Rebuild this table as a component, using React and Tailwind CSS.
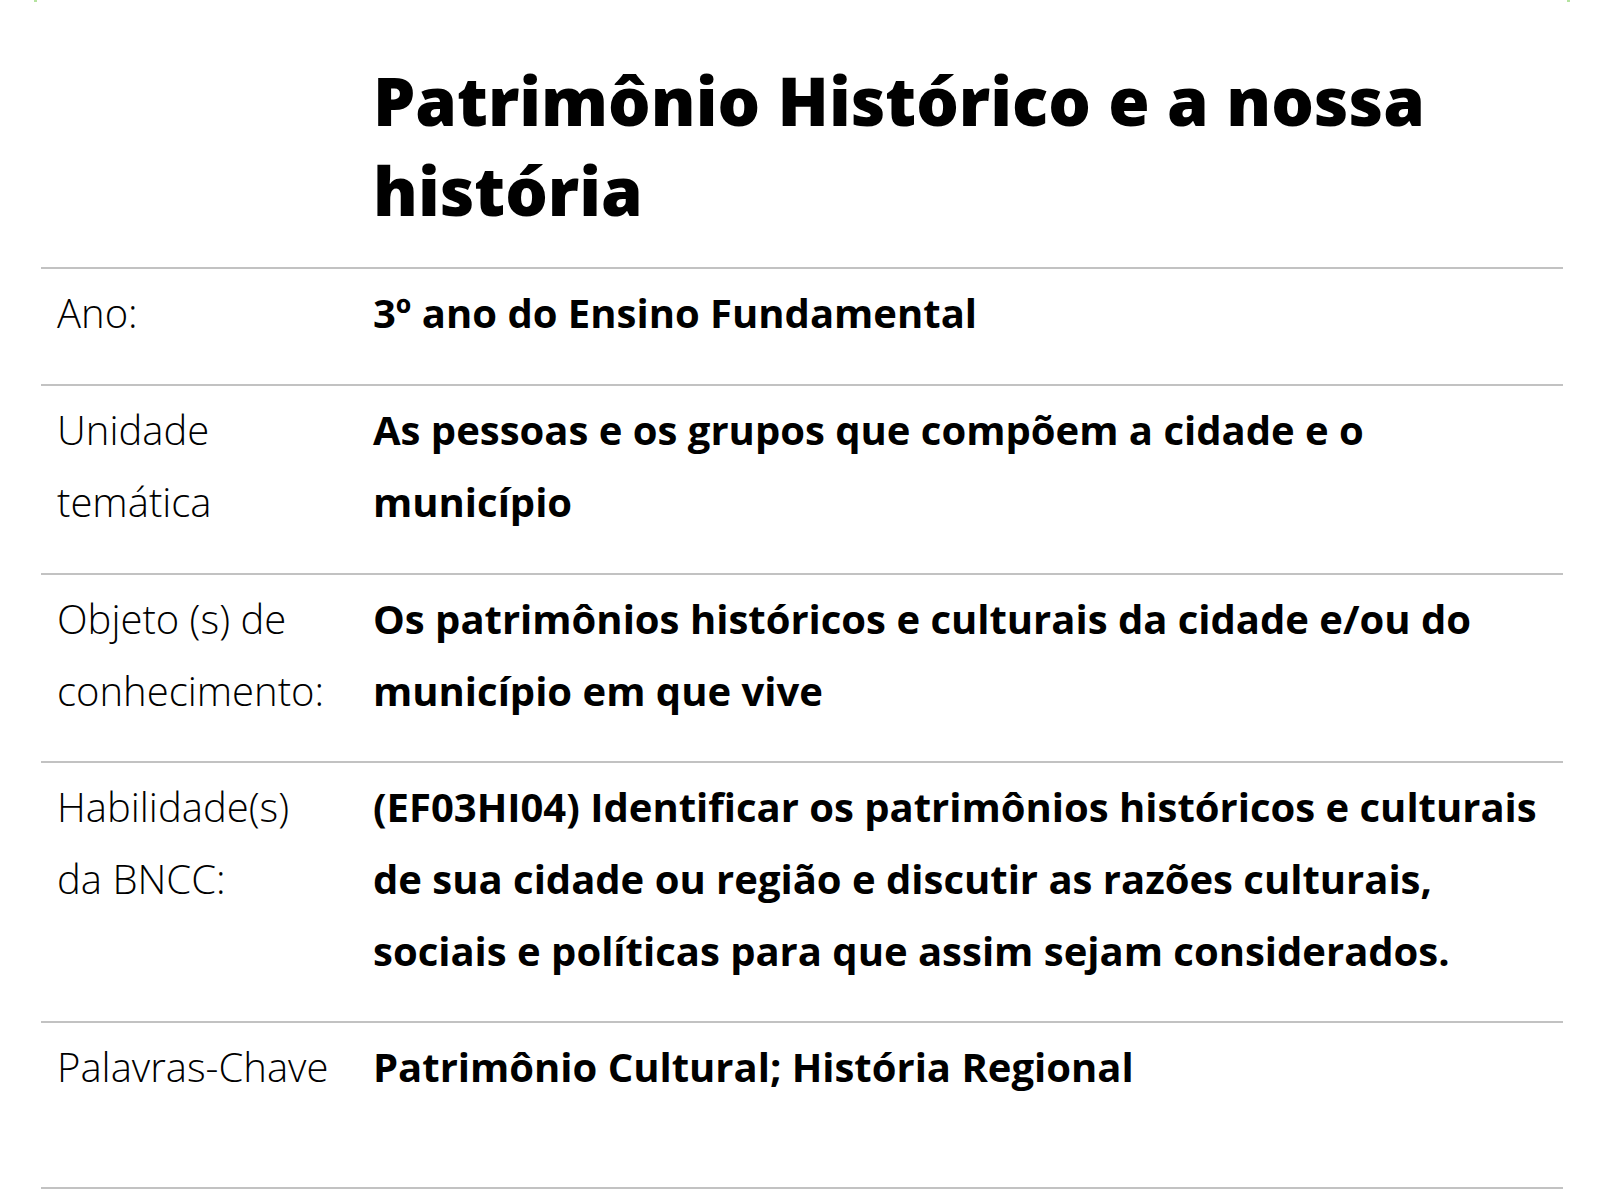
export default function App() {
  const rows = [
    { label: ["Ano:"], value: "3º ano do Ensino Fundamental", pb: "pb-[35px]" },
    {
      label: ["Unidade", "temática"],
      value: "As pessoas e os grupos que compõem a cidade e o município",
      pb: "pb-[35px]",
    },
    {
      label: ["Objeto (s) de", "conhecimento:"],
      value: "Os patrimônios históricos e culturais da cidade e/ou do município em que vive",
      pb: "pb-[34px]",
    },
    {
      label: ["Habilidade(s)", "da BNCC:"],
      value:
        "(EF03HI04) Identificar os patrimônios históricos e culturais de sua cidade ou região e discutir as razões culturais, sociais e políticas para que assim sejam considerados.",
      pb: "pb-[34px]",
    },
    {
      label: ["Palavras-Chave"],
      value: "Patrimônio Cultural; História Regional",
      pb: "pb-[84px]",
    },
  ];
  return (
    <div className="relative min-h-[1200px] bg-white text-black font-['Open_Sans',sans-serif]">
      <div className="absolute left-[34px] top-0 h-[2px] w-[3px] bg-[#b5e3a0]" />
      <div className="absolute left-[1567px] top-0 h-[2px] w-[3px] bg-[#b5e3a0]" />
      <div className="pl-[41px] pr-[37px] pt-[55px]">
        <h1 className="pl-[332px] pr-[100px] text-[67px] leading-[90px] font-extrabold">
          Patrimônio Histórico e a nossa história
        </h1>
        <div className="mt-[32px] border-t-2 border-[#c2c2c2]">
          {rows.map((r, i) => (
            <div
              key={i}
              className={`grid grid-cols-[332px_1fr] border-b-2 border-[#c2c2c2] pt-[8px] ${r.pb}`}
            >
              <div className="pl-[16px] text-[40px] leading-[72px] font-light">
                {r.label.map((l, j) => (
                  <div key={j}>{l}</div>
                ))}
              </div>
              <div className="pr-[12px] text-[40px] leading-[72px] font-bold">{r.value}</div>
            </div>
          ))}
        </div>
      </div>
    </div>
  );
}
